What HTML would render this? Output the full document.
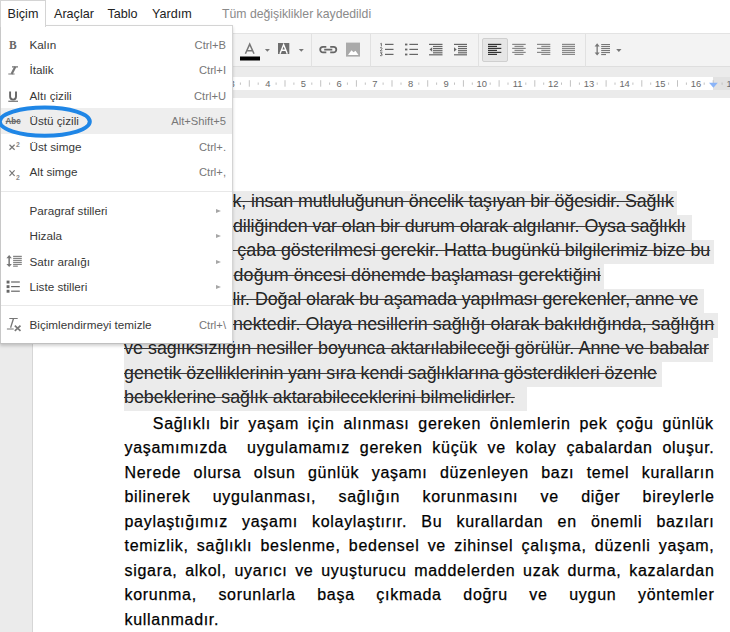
<!DOCTYPE html>
<html><head><meta charset="utf-8">
<style>
*{margin:0;padding:0;box-sizing:border-box}
html,body{width:730px;height:632px;overflow:hidden;background:#fff;font-family:"Liberation Sans",sans-serif;position:relative}
.abs{position:absolute}
.mb{position:absolute;top:6.6px;font-size:12.6px;color:#222;white-space:nowrap}
#tab{position:absolute;left:0;top:0;width:46px;height:27px;border:1px solid #d4d4d4;border-bottom:none;background:#fff;z-index:6}
#toolbar{position:absolute;left:0;top:33px;width:730px;height:34px;background:#f3f3f3;border-top:1px solid #e3e3e3;border-bottom:1px solid #dedede}
#editor{position:absolute;left:0;top:67px;width:730px;height:565px;background:#ebebeb}
#ruler{position:absolute;left:33px;top:77px;width:680px;height:13px;background:#fff}
#rulerR{position:absolute;left:713px;top:77px;width:17px;height:13px;background:#e2e2e2}
#page{position:absolute;left:33px;top:98px;width:697px;height:534px;background:#fff;box-shadow:-1px 0 0 #d6d6d6}
.hl{position:absolute;left:124px;height:24.5px;background:#ebebeb}
.st{position:absolute;left:124px;font-size:17.85px;line-height:24px;color:#222;white-space:pre;text-decoration:line-through;text-decoration-thickness:1.1px;text-decoration-color:#3a3a3a}
.bl{position:absolute;left:124.5px;width:590px;font-size:16px;line-height:24px;letter-spacing:0.7px;color:#000;-webkit-text-stroke:0.25px #000;white-space:nowrap;text-align:justify;text-align-last:justify}
#menu{position:absolute;left:0;top:25px;width:233px;height:319px;background:#fff;border:1px solid #d4d4d4;border-bottom-color:#c0c0c0;border-left-color:#c8c8c8;box-shadow:0 2px 3px rgba(0,0,0,.18);z-index:5}
.mi{position:absolute;left:28.5px;font-size:11.7px;color:#383838;white-space:nowrap}
.sc{position:absolute;right:6px;font-size:11.2px;color:#777;white-space:nowrap;text-align:right}
.sep{position:absolute;left:0;width:231px;height:1px;background:#e8e8e8}
.arr{position:absolute;left:214.5px;width:0;height:0;border-left:5.5px solid #a6a6a6;border-top:2.6px solid transparent;border-bottom:2.6px solid transparent}
.sepv{position:absolute;top:34px;width:1px;height:33px;background:#e1e1e1}
</style></head><body>
<div id="tab"></div>
<div class="mb" style="left:7.6px;z-index:7">Biçim</div>
<div class="mb" style="left:54px">Araçlar</div>
<div class="mb" style="left:107.5px">Tablo</div>
<div class="mb" style="left:152px">Yardım</div>
<div class="mb" style="left:222px;color:#8a8a8a;font-size:12.25px">Tüm değişiklikler kaydedildi</div>

<div id="toolbar"></div>
<div id="editor"></div>
<div id="ruler"></div>
<div id="rulerR"></div>
<div id="page"></div>
<svg class="abs" style="left:0;top:0" width="730" height="100" viewBox="0 0 730 100">
<g fill="#c2c2c2"><rect x="34.7" y="80.2" width="1" height="6.5"/><rect x="43.7" y="82.5" width="1" height="2.3"/><rect x="61.5" y="82.5" width="1" height="2.3"/><rect x="70.4" y="80.2" width="1" height="6.5"/><rect x="79.3" y="82.5" width="1" height="2.3"/><rect x="97.2" y="82.5" width="1" height="2.3"/><rect x="106.1" y="80.2" width="1" height="6.5"/><rect x="115.0" y="82.5" width="1" height="2.3"/><rect x="132.9" y="82.5" width="1" height="2.3"/><rect x="141.8" y="80.2" width="1" height="6.5"/><rect x="150.7" y="82.5" width="1" height="2.3"/><rect x="168.5" y="82.5" width="1" height="2.3"/><rect x="177.5" y="80.2" width="1" height="6.5"/><rect x="186.4" y="82.5" width="1" height="2.3"/><rect x="204.2" y="82.5" width="1" height="2.3"/><rect x="213.1" y="80.2" width="1" height="6.5"/><rect x="222.1" y="82.5" width="1" height="2.3"/><rect x="239.9" y="82.5" width="1" height="2.3"/><rect x="248.8" y="80.2" width="1" height="6.5"/><rect x="257.7" y="82.5" width="1" height="2.3"/><rect x="275.6" y="82.5" width="1" height="2.3"/><rect x="284.5" y="80.2" width="1" height="6.5"/><rect x="293.4" y="82.5" width="1" height="2.3"/><rect x="311.3" y="82.5" width="1" height="2.3"/><rect x="320.2" y="80.2" width="1" height="6.5"/><rect x="329.1" y="82.5" width="1" height="2.3"/><rect x="346.9" y="82.5" width="1" height="2.3"/><rect x="355.9" y="80.2" width="1" height="6.5"/><rect x="364.8" y="82.5" width="1" height="2.3"/><rect x="382.6" y="82.5" width="1" height="2.3"/><rect x="391.5" y="80.2" width="1" height="6.5"/><rect x="400.5" y="82.5" width="1" height="2.3"/><rect x="418.3" y="82.5" width="1" height="2.3"/><rect x="427.2" y="80.2" width="1" height="6.5"/><rect x="436.1" y="82.5" width="1" height="2.3"/><rect x="454.0" y="82.5" width="1" height="2.3"/><rect x="462.9" y="80.2" width="1" height="6.5"/><rect x="471.8" y="82.5" width="1" height="2.3"/><rect x="489.7" y="82.5" width="1" height="2.3"/><rect x="498.6" y="80.2" width="1" height="6.5"/><rect x="507.5" y="82.5" width="1" height="2.3"/><rect x="525.3" y="82.5" width="1" height="2.3"/><rect x="534.3" y="80.2" width="1" height="6.5"/><rect x="543.2" y="82.5" width="1" height="2.3"/><rect x="561.0" y="82.5" width="1" height="2.3"/><rect x="569.9" y="80.2" width="1" height="6.5"/><rect x="578.9" y="82.5" width="1" height="2.3"/><rect x="596.7" y="82.5" width="1" height="2.3"/><rect x="605.6" y="80.2" width="1" height="6.5"/><rect x="614.5" y="82.5" width="1" height="2.3"/><rect x="632.4" y="82.5" width="1" height="2.3"/><rect x="641.3" y="80.2" width="1" height="6.5"/><rect x="650.2" y="82.5" width="1" height="2.3"/><rect x="668.1" y="82.5" width="1" height="2.3"/><rect x="677.0" y="80.2" width="1" height="6.5"/><rect x="685.9" y="82.5" width="1" height="2.3"/><rect x="703.7" y="82.5" width="1" height="2.3"/><rect x="712.7" y="80.2" width="1" height="6.5"/><rect x="721.6" y="82.5" width="1" height="2.3"/></g>
<g fill="#6a6a6a" font-family="Liberation Sans" font-size="9.4" text-anchor="middle"><text x="160.7" y="86.7">1</text><text x="196.4" y="86.7">2</text><text x="232.1" y="86.7">3</text><text x="267.8" y="86.7">4</text><text x="303.4" y="86.7">5</text><text x="339.1" y="86.7">6</text><text x="374.8" y="86.7">7</text><text x="410.5" y="86.7">8</text><text x="446.2" y="86.7">9</text><text x="481.8" y="86.7">10</text><text x="517.5" y="86.7">11</text><text x="553.2" y="86.7">12</text><text x="588.9" y="86.7">13</text><text x="624.6" y="86.7">14</text><text x="660.2" y="86.7">15</text><text x="695.9" y="86.7">16</text><text x="731.6" y="86.7">17</text></g>
<path d="M709 82.7 L717.8 82.7 L713.4 87.7 Z" fill="#8ab4f8"/>
</svg>
<div class="sepv" style="left:311px"></div>
<div class="sepv" style="left:370px"></div>
<div class="sepv" style="left:478px"></div>
<div class="sepv" style="left:585px"></div>
<div class="abs" style="left:482px;top:38px;width:26px;height:24px;background:#e6e6e6;border:1px solid #cfcfcf;border-radius:2px"></div>
<svg class="abs" style="left:0;top:0" width="730" height="70" viewBox="0 0 730 70">
 <!-- font color A -->
 <path d="M245.4 53.8 L249.7 44.2 L254 53.8 M247.2 50.8 L252.2 50.8" stroke="#777" stroke-width="1.5" fill="none"/>
 <rect x="240" y="56.5" width="20" height="4" fill="#000"/>
 <path d="M264.9 49 L269.9 49 L267.4 51.8 Z" fill="#777"/>
 <!-- highlight A -->
 <rect x="278" y="43" width="11.3" height="11" fill="#6e6e6e"/>
 <path d="M280 53.8 L283.65 44.6 L287.3 53.8 M281.4 50.3 L285.9 50.3" stroke="#fff" stroke-width="1.4" fill="none"/>
 <path d="M298.8 49 L303.8 49 L301.3 51.8 Z" fill="#777"/>
 <!-- link -->
 <path d="M326.3 46.8 H323 A2.8 2.8 0 0 0 323 52.4 H326.3 M330.2 46.8 H333.5 A2.8 2.8 0 0 1 333.5 52.4 H330.2 M324.2 49.6 H332.3" fill="none" stroke="#666" stroke-width="1.8"/>
 <!-- image -->
 <rect x="346" y="42.6" width="14" height="14" fill="#aaa"/>
 <path d="M348 55 L351.5 50.2 L353.5 52.2 L355.5 50.8 L358.5 55 Z" fill="#fff"/>
 <!-- numbered list -->
 <g fill="#666">
 <path d="M380.3 43.9 L381.4 43.3 V46.4 M380 47.9 Q381.2 47.3 382 48 Q382.3 48.7 381.5 49.5 L380.1 50.9 H382.4 M380 52.8 H382.2 L381 54 Q382.5 54.2 382.3 55.2 Q381.8 56 380 55.6" fill="none" stroke="#666" stroke-width="0.9"/>
 <rect x="385" y="43.8" width="8.5" height="1.2"/>
 <rect x="385" y="48.8" width="8.5" height="1.2"/>
 <rect x="385" y="53.8" width="8.5" height="1.2"/>
 <!-- bullets -->
 <rect x="405" y="43.6" width="2.4" height="1.8"/>
 <rect x="405" y="48.6" width="2.4" height="1.8"/>
 <rect x="405" y="53.6" width="2.4" height="1.8"/>
 <rect x="409.4" y="43.8" width="8.6" height="1.2"/>
 <rect x="409.4" y="48.8" width="8.6" height="1.2"/>
 <rect x="409.4" y="53.8" width="8.6" height="1.2"/>
 <!-- decrease indent -->
 <rect x="429" y="43.8" width="13.5" height="1.2"/>
 <rect x="433" y="45.9" width="9.5" height="1.2"/>
 <rect x="433" y="48" width="9.5" height="1.2"/>
 <rect x="433" y="50.1" width="9.5" height="1.2"/>
 <rect x="433" y="52.2" width="9.5" height="1.2"/>
 <rect x="429" y="54.2" width="13.5" height="1.2"/>
 <path d="M429.5 49.5 L432.2 47.3 L432.2 51.7 Z"/>
 <!-- increase indent -->
 <rect x="454" y="43.8" width="13" height="1.2"/>
 <rect x="458" y="45.9" width="9" height="1.2"/>
 <rect x="458" y="48" width="9" height="1.2"/>
 <rect x="458" y="50.1" width="9" height="1.2"/>
 <rect x="458" y="52.2" width="9" height="1.2"/>
 <rect x="454" y="54.2" width="13" height="1.2"/>
 <path d="M456.7 49.5 L454 47.3 L454 51.7 Z"/>
 </g>
 <!-- align left (pressed) -->
 <g fill="#333">
 <rect x="488" y="43.8" width="13.3" height="1.2"/>
 <rect x="488" y="45.8" width="9" height="1.2"/>
 <rect x="488" y="47.8" width="13.3" height="1.2"/>
 <rect x="488" y="49.8" width="9" height="1.2"/>
 <rect x="488" y="51.8" width="13.3" height="1.2"/>
 <rect x="488" y="53.8" width="9" height="1.2"/>
 </g>
 <g fill="#888">
 <rect x="512.2" y="43.8" width="13.5" height="1.2"/>
 <rect x="514.5" y="45.8" width="9" height="1.2"/>
 <rect x="512.2" y="47.8" width="13.5" height="1.2"/>
 <rect x="514.5" y="49.8" width="9" height="1.2"/>
 <rect x="512.2" y="51.8" width="13.5" height="1.2"/>
 <rect x="514.5" y="53.8" width="9" height="1.2"/>

 <rect x="537" y="43.8" width="13.3" height="1.2"/>
 <rect x="541.3" y="45.8" width="9" height="1.2"/>
 <rect x="537" y="47.8" width="13.3" height="1.2"/>
 <rect x="541.3" y="49.8" width="9" height="1.2"/>
 <rect x="537" y="51.8" width="13.3" height="1.2"/>
 <rect x="541.3" y="53.8" width="9" height="1.2"/>

 <rect x="562" y="43.8" width="13" height="1.2"/>
 <rect x="562" y="45.8" width="13" height="1.2"/>
 <rect x="562" y="47.8" width="13" height="1.2"/>
 <rect x="562" y="49.8" width="13" height="1.2"/>
 <rect x="562" y="51.8" width="13" height="1.2"/>
 <rect x="562" y="53.8" width="13" height="1.2"/>
 </g>
 <!-- line spacing -->
 <g fill="#777">
 <path d="M594.6 46.5 L597.15 43.3 L599.7 46.5 Z M594.6 52.4 L597.15 55.6 L599.7 52.4 Z"/>
 <rect x="596.5" y="46" width="1.3" height="7"/>
 <rect x="601.2" y="44" width="8.8" height="1.1"/>
 <rect x="601.2" y="46" width="8.8" height="1.1"/>
 <rect x="601.2" y="48" width="8.8" height="1.1"/>
 <rect x="601.2" y="50" width="8.8" height="1.1"/>
 <rect x="601.2" y="52" width="8.8" height="1.1"/>
 <rect x="601.2" y="54" width="4.8" height="1.1"/>
 <path d="M616.2 49 L621.5 49 L618.85 51.9 Z"/>
 </g>
</svg>

<!-- strikethrough highlighted paragraph -->
<div class="hl" style="top:190.5px;width:553.4px"></div>
<div class="hl" style="top:215px;width:568px"></div>
<div class="hl" style="top:239.5px;width:590px"></div>
<div class="hl" style="top:264px;width:480px"></div>
<div class="hl" style="top:288.5px;width:579.5px"></div>
<div class="hl" style="top:313px;width:593.5px"></div>
<div class="hl" style="top:337.5px;width:588.5px"></div>
<div class="hl" style="top:362px;width:537.8px"></div>
<div class="hl" style="top:386.5px;width:402.7px;height:24px"></div>

<div class="st" style="top:189.3px;left:232.4px;letter-spacing:-0.1px">k, insan mutluluğunun öncelik taşıyan bir öğesidir. Sağlık</div>
<div class="st" style="top:213.8px;left:232.9px;letter-spacing:-0.075px">diliğinden var olan bir durum olarak algılanır. Oysa sağlıklı</div>
<div class="st" style="top:238.3px;left:232.4px;letter-spacing:-0.02px"> çaba gösterilmesi gerekir. Hatta bugünkü bilgilerimiz bize bu</div>
<div class="st" style="top:262.8px;left:233.6px;letter-spacing:0.1px">doğum öncesi dönemde başlaması gerektiğini</div>
<div class="st" style="top:287.3px;left:232.4px;letter-spacing:-0.06px">lir. Doğal olarak bu aşamada yapılması gerekenler, anne ve</div>
<div class="st" style="top:311.8px;left:232.9px;letter-spacing:0.02px">nektedir. Olaya nesillerin sağlığı olarak bakıldığında, sağlığın</div>
<div class="st" style="top:336.3px;word-spacing:0.2px">ve sağlıksızlığın nesiller boyunca aktarılabileceği görülür. Anne ve babalar</div>
<div class="st" style="top:360.8px;word-spacing:-0.37px">genetik özelliklerinin yanı sıra kendi sağlıklarına gösterdikleri özenle</div>
<div class="st" style="top:385.3px">bebeklerine sağlık aktarabileceklerini bilmelidirler.</div>

<!-- body paragraph -->
<div class="bl" style="top:411.9px;left:152.8px;width:561px">Sağlıklı bir yaşam için alınması gereken önlemlerin pek çoğu günlük</div>
<div class="bl" style="top:436.4px">yaşamımızda&nbsp; uygulamamız gereken küçük ve kolay çabalardan oluşur.</div>
<div class="bl" style="top:460.9px">Nerede olursa olsun günlük yaşamı düzenleyen bazı temel kuralların</div>
<div class="bl" style="top:485.4px">bilinerek uygulanması, sağlığın korunmasını ve diğer bireylerle</div>
<div class="bl" style="top:509.9px">paylaştığımız yaşamı kolaylaştırır. Bu kurallardan en önemli bazıları</div>
<div class="bl" style="top:534.4px">temizlik, sağlıklı beslenme, bedensel ve zihinsel çalışma, düzenli yaşam,</div>
<div class="bl" style="top:558.9px">sigara, alkol, uyarıcı ve uyuşturucu maddelerden uzak durma, kazalardan</div>
<div class="bl" style="top:583.4px">korunma, sorunlarla başa çıkmada doğru ve uygun yöntemler</div>
<div class="bl" style="top:607.9px;text-align-last:left">kullanmadır.</div>

<!-- menu -->
<div id="menu">
  <div class="abs" style="left:0;top:82.4px;width:231px;height:25.4px;background:#eee"></div>
  <div class="mi" style="top:11.6px">Kalın</div><div class="sc" style="top:12.9px">Ctrl+B</div>
  <div class="mi" style="top:37.1px">İtalik</div><div class="sc" style="top:38.4px">Ctrl+I</div>
  <div class="mi" style="top:62.6px">Altı çizili</div><div class="sc" style="top:63.9px">Ctrl+U</div>
  <div class="mi" style="top:88.1px">Üstü çizili</div><div class="sc" style="top:89.4px">Alt+Shift+5</div>
  <div class="mi" style="top:113.6px">Üst simge</div><div class="sc" style="top:114.9px">Ctrl+.</div>
  <div class="mi" style="top:139.1px">Alt simge</div><div class="sc" style="top:140.4px">Ctrl+,</div>
  <div class="sep" style="top:165px"></div>
  <div class="mi" style="top:177.6px">Paragraf stilleri</div><div class="arr" style="top:182.8px"></div>
  <div class="mi" style="top:203.1px">Hizala</div><div class="arr" style="top:208.3px"></div>
  <div class="mi" style="top:228.6px">Satır aralığı</div><div class="arr" style="top:233.8px"></div>
  <div class="mi" style="top:254.1px">Liste stilleri</div><div class="arr" style="top:259.3px"></div>
  <div class="sep" style="top:279px"></div>
  <div class="mi" style="top:291.6px">Biçimlendirmeyi temizle</div><div class="sc" style="top:292.9px">Ctrl+\</div>

</div>
  <svg class="abs" style="left:0;top:0;z-index:7" width="233" height="345" viewBox="0 0 233 345">
   <text x="9" y="48.8" font-family="Liberation Serif" font-weight="bold" font-size="11.5" fill="#666">B</text>
   <g fill="none" stroke="#777">
    <path d="M12 66.8 H18 M8.3 74 H14.6" stroke-width="1.2"/>
    <path d="M15.3 66.8 L11.6 74" stroke-width="2.2"/>
   </g>
   <path d="M10.1 91.6 V96.5 Q10.1 99.6 13.1 99.6 Q16 99.6 16 96.5 V91.6" fill="none" stroke="#666" stroke-width="1.9"/>
   <rect x="8.3" y="100.7" width="9.7" height="1.1" fill="#666"/>
   <text x="5.6" y="123.8" font-family="Liberation Sans" font-weight="bold" font-size="9" fill="#666" textLength="15" lengthAdjust="spacingAndGlyphs">Abc</text>
   <rect x="5.6" y="120.9" width="15.1" height="1" fill="#666"/>
   <path d="M9.5 144.8 L14.6 149.8 M14.6 144.8 L9.5 149.8 M9.5 170.4 L14.6 175.8 M14.6 170.4 L9.5 175.8" stroke="#777" stroke-width="1.2" fill="none"/>
   <text x="16" y="146.8" font-family="Liberation Sans" font-weight="bold" font-size="6.8" fill="#888">2</text>
   <text x="16" y="179.9" font-family="Liberation Sans" font-weight="bold" font-size="6.8" fill="#888">2</text>
   <!-- line spacing -->
   <g fill="#777">
    <path d="M6.4 258.2 L9.15 255.1 L11.9 258.2 Z M6.4 263.9 L9.15 267 L11.9 263.9 Z"/>
    <rect x="8.4" y="257.8" width="1.5" height="6.5"/>
    <rect x="13.1" y="255.8" width="8.7" height="1.1"/>
    <rect x="13.1" y="257.8" width="8.7" height="1.1"/>
    <rect x="13.1" y="259.8" width="8.7" height="1.1"/>
    <rect x="13.1" y="261.8" width="8.7" height="1.1"/>
    <rect x="13.1" y="263.8" width="8.7" height="1.1"/>
    <rect x="13.1" y="265.6" width="4.7" height="1.1"/>
   </g>
   <!-- list -->
   <g fill="#666">
    <rect x="6.6" y="280.6" width="2.9" height="2.9"/>
    <rect x="6.6" y="285.2" width="2.9" height="2.9"/>
    <rect x="6.6" y="289.8" width="2.9" height="2.9"/>
    <rect x="11.1" y="281.4" width="8.7" height="1.2"/>
    <rect x="11.1" y="286" width="8.7" height="1.2"/>
    <rect x="11.1" y="290.6" width="8.7" height="1.2"/>
   </g>
   <!-- clear formatting -->
   <g fill="none" stroke="#777">
    <path d="M9.3 318.5 H17.7 M6.9 329 H13.7" stroke-width="1.1"/>
    <path d="M13.5 318.5 L10.6 327.8" stroke-width="1.3"/>
    <path d="M14.8 325.6 L20.5 330.8 M20.5 325.6 L14.8 330.8" stroke-width="1.7"/>
   </g>
  </svg>
<!-- blue ellipse -->
<svg class="abs" style="left:0;top:0;z-index:8" width="100" height="150" viewBox="0 0 100 150">
 <ellipse cx="44.8" cy="121.6" rx="45" ry="14.1" fill="none" stroke="#1f86e6" stroke-width="4"/>
</svg>
</body></html>
